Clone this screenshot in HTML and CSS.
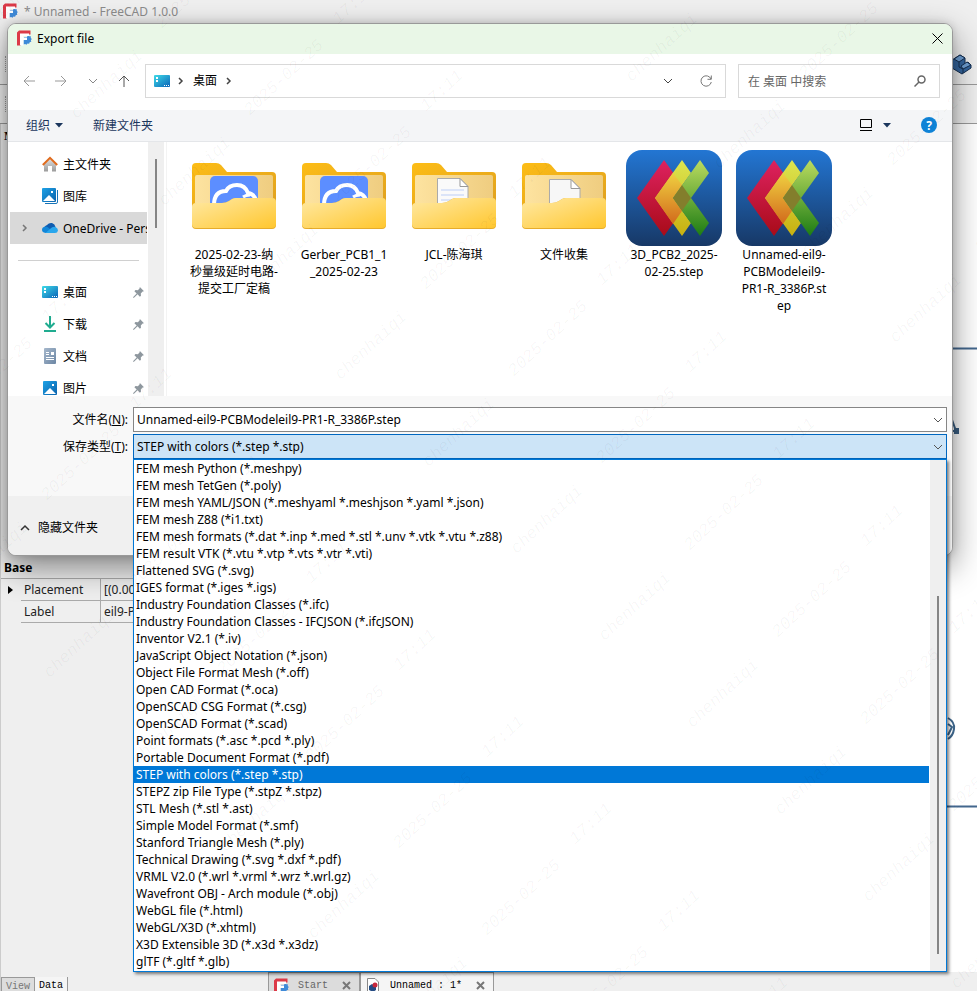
FILE: index.html
```html
<!DOCTYPE html>
<html lang="zh-CN">

<head>
    <meta charset="UTF-8" />
    <title>Export file</title>
    <link rel="stylesheet" href="styles.css">
</head>

<body>
    <!-- shared icons -->
    <svg class="defs" width="0" height="0" aria-hidden="true">
        <defs>
            <linearGradient id="gBack" x1="0" y1="0" x2="1" y2="1">
                <stop offset="0" stop-color="#fdbd16" />
                <stop offset="1" stop-color="#dfa01f" />
            </linearGradient>
            <linearGradient id="gInner" x1="0" y1="0" x2="1" y2="0">
                <stop offset="0" stop-color="#fde3a0" />
                <stop offset="1" stop-color="#efcd80" />
            </linearGradient>
            <linearGradient id="gFront" x1="0" y1="0" x2="1" y2="1">
                <stop offset="0" stop-color="#ffe9a4" />
                <stop offset="1" stop-color="#ffc72f" />
            </linearGradient>
            <linearGradient id="gStep" x1="0" y1="0" x2="0" y2="1">
                <stop offset="0" stop-color="#2376d3" />
                <stop offset="1" stop-color="#173866" />
            </linearGradient>
            <linearGradient id="gRed" x1="0" y1="0" x2="0" y2="1">
                <stop offset="0" stop-color="#de2260" />
                <stop offset="1" stop-color="#a80b18" />
            </linearGradient>
            <linearGradient id="gYellow" x1="0" y1="0" x2="0" y2="1">
                <stop offset="0" stop-color="#dce650" />
                <stop offset="1" stop-color="#c8b010" />
            </linearGradient>
            <linearGradient id="gOrange" x1="0" y1="0" x2="0" y2="1">
                <stop offset="0" stop-color="#efd040" />
                <stop offset="1" stop-color="#d26a1c" />
            </linearGradient>
            <linearGradient id="gGreen" x1="0" y1="0" x2="0" y2="1">
                <stop offset="0" stop-color="#bcdc60" />
                <stop offset="1" stop-color="#1d7c14" />
            </linearGradient>
            <linearGradient id="gDesk" x1="0" y1="0" x2="1" y2="1">
                <stop offset="0" stop-color="#3fdbe8" />
                <stop offset="1" stop-color="#0a63b8" />
            </linearGradient>
            <linearGradient id="gPic" x1="0" y1="0" x2="1" y2="1">
                <stop offset="0" stop-color="#1ea2e6" />
                <stop offset="1" stop-color="#0a62ac" />
            </linearGradient>
            <linearGradient id="gHouse" x1="0" y1="0" x2="0" y2="1">
                <stop offset="0" stop-color="#e2e2e2" />
                <stop offset="1" stop-color="#9b9b9b" />
            </linearGradient>
            <linearGradient id="gDoc" x1="0" y1="0" x2="1" y2="1">
                <stop offset="0" stop-color="#a6b8cc" />
                <stop offset="1" stop-color="#6c86a4" />
            </linearGradient>
        </defs>
        <symbol id="logo" viewBox="0 0 16 16">
            <path d="M3 .5h11.500v4H5V15.500H1V2.500z" fill="#dc3a48" />
            <path d="M8 7h3l.8-1.700 1.500.9 1.500.1v1.700l1 1-.9 1.300.4 1.500-1.600.4-.6 1.500-1.600-.3-1 1.300-1.400-.8-1.600.5V9z" fill="#3f8ad8" />
            <path d="M4 3.500h9V6H7.500v1.500H11V10H7.500v5.500H4z" fill="#fff" />
        </symbol>
        <symbol id="folder-back" viewBox="0 0 96 96">
            <path d="M6 17a4 4 0 0 1 4-4h20q3 0 5 2l6 7h45a4 4 0 0 1 4 4v30H6z" fill="url(#gBack)" />
            <path d="M9 27q0-2 2-2h74q2 0 2 2v26H9z" fill="url(#gInner)" />
        </symbol>
        <symbol id="folder-front" viewBox="0 0 96 96">
            <path d="M6 75V57a4 4 0 0 1 4-4h26q4 0 7-2l3-2q2-1 4-1h36a4 4 0 0 1 4 4v23a4 4 0 0 1-4 4H10a4 4 0 0 1-4-4z" fill="#e6ac2c" />
            <path d="M6 74V57a4 4 0 0 1 4-4h26q4 0 7-2l3-2q2-1 4-1h36a4 4 0 0 1 4 4v22a4 4 0 0 1-4 4H10a4 4 0 0 1-4-4z" fill="url(#gFront)" />
        </symbol>
        <symbol id="folder-cloud" viewBox="0 0 96 96">
            <use href="#folder-back" />
            <rect x="24" y="26" width="48" height="40" rx="5" fill="#5c8eff" />
            <path d="M28 55q0-14 12-14 3-6 11-6 8 0 11 8 6 1 8 7" fill="none" stroke="#fff" stroke-width="4" />
            <path d="M57 47q3-2 7-2" fill="none" stroke="#fff" stroke-width="3" />
            <use href="#folder-front" />
        </symbol>
        <symbol id="folder-text" viewBox="0 0 96 96">
            <use href="#folder-back" />
            <path d="M31.500 28.500H54l8 8V62H31.500z" fill="#fafafa" stroke="#aaa" />
            <path d="M54 28.500v8h8z" fill="#fff" stroke="#999" />
            <path d="M35 40h23M35 45h23M35 50h23" stroke="#dbe4f8" stroke-width="2" />
            <use href="#folder-front" />
        </symbol>
        <symbol id="folder-blank" viewBox="0 0 96 96">
            <use href="#folder-back" />
            <path d="M33.500 29.500H55l9 9V62H33.500z" fill="#f7f7f7" stroke="#aaa" />
            <path d="M55 29.500v9h9z" fill="#fff" stroke="#999" />
            <use href="#folder-front" />
        </symbol>
        <symbol id="step" viewBox="0 0 96 96">
            <rect width="96" height="96" rx="16" fill="url(#gStep)" />
            <path d="M38 10 11 48l27 38 18-25-9-13 9-13z" fill="url(#gRed)" />
            <path d="M56 10 29 48l27 38 9-13-18-25 18-25z" fill="url(#gYellow)" />
            <path d="M47 23 29 48l18 26 9-13-9-13 9-13z" fill="url(#gOrange)" />
            <path d="M74 10 47 48l27 38 9-13-18-25 18-25z" fill="url(#gGreen)" />
            <path d="M56 35 47 48l9 13 9-13z" fill="#837e2c" />
        </symbol>
        <symbol id="desk" viewBox="0 0 16 16">
            <rect y="2" width="16" height="12" rx="1" fill="url(#gDesk)" />
            <path d="M2 4h2v2H2zM2 7h2v2H2z" fill="#fff" />
            <path d="M10 12h1v1h-1zM12 12h1v1h-1zM14 12h1v1h-1z" fill="#fff" />
        </symbol>
        <symbol id="pin" viewBox="0 0 12 12">
            <path d="M7.500 0 12 4.500l-1.500.5-2 2 .2 2.500L7.500 10.500 5 8 .8 12 0 11.200 4 7 1.500 4.500l1.200-1.200 2.600.2 1.800-2z" fill="#8e979e" />
        </symbol>
        <symbol id="chev" viewBox="0 0 10 10">
            <path d="m1 3 4 4 4-4" fill="none" stroke="currentColor" />
        </symbol>
        <symbol id="chev-right" viewBox="0 0 8 8">
            <path d="m2 1 3 3-3 3" fill="none" stroke="currentColor" stroke-width="1.500" />
        </symbol>
        <symbol id="caret" viewBox="0 0 8 5">
            <path d="M0 0h8L4 4.500z" fill="currentColor" />
        </symbol>
    </svg>

    <!-- main window -->
    <div class="app">
        <div class="app-title">
            <svg width="16" height="16"><use href="#logo" /></svg>
            <span>* Unnamed - FreeCAD 1.0.0</span>
        </div>
        <div class="toolbar toolbar-top">
            <i class="grip"></i>
            <svg width="22" height="22" viewBox="0 0 22 22">
                <path d="M2 7 10 2l5 3v6l3-2 3 3v3l-9 6-10-6z" fill="#35669f" stroke="#142e50" />
                <path d="m4 6 6-4 5 3-6 4zM11 13l6-4 4 3-8 4z" fill="#6f9fd3" stroke="#142e50" />
                <path d="M9 9v5l4 2v4" fill="none" stroke="#142e50" />
            </svg>
        </div>
        <div class="toolbar"><i class="grip"></i></div>
        <div class="workspace">
            <div class="dock">
                <div class="tree"><b>M</b></div>
                <table class="props">
                    <colgroup>
                        <col class="mark-col">
                        <col class="name-col">
                        <col>
                    </colgroup>
                    <tr>
                        <th colspan="3">Base</th>
                    </tr>
                    <tr>
                        <td class="mark"><svg width="5" height="8"><path d="M0 0v8l5-4z" /></svg></td>
                        <td>Placement</td>
                        <td>[(0.00</td>
                    </tr>
                    <tr>
                        <td class="mark"></td>
                        <td>Label</td>
                        <td>eil9-P</td>
                    </tr>
                </table>
                <div class="dock-tabs">
                    <button>View</button>
                    <button class="active">Data</button>
                </div>
            </div>
            <div class="main">
                <div class="view">
                    <svg width="30" height="848" viewBox="0 0 30 848">
                        <path d="M0 224.500h30M0 682.500h30" stroke="#43678d" stroke-width="2" />
                        <path d="m4 293 5 14H0" fill="none" stroke="#3b5f83" stroke-width="2" />
                        <path d="M7 304h5v6H7z" fill="#3b5f83" />
                        <path d="M1 594q7 4 6 11t-6 10M1 600l4 3-4 8" fill="none" stroke="#3b6286" stroke-width="2" />
                    </svg>
                </div>
                <div class="doc-tabs">
                    <button class="doc-tab">
                        <svg width="16" height="16"><use href="#logo" /></svg>
                        <span>Start</span>
                        <svg class="x" width="9" height="9"><path d="m1 1 7 7m0-7-7 7" /></svg>
                    </button>
                    <button class="doc-tab active">
                        <svg width="16" height="16" viewBox="0 0 16 16">
                            <path d="M2.500.5H10L13.500 4v12h-11z" fill="#fff" stroke="#888" />
                            <path d="m4 8 3-2 4 2v4l-3 2-4-2z" fill="#244b83" />
                            <circle cx="10" cy="7" r="2.500" fill="#c8283c" />
                        </svg>
                        <span>Unnamed : 1*</span>
                        <svg class="x" width="9" height="9"><path d="m1 1 7 7m0-7-7 7" /></svg>
                    </button>
                </div>
            </div>
        </div>
    </div>

    <!-- export dialog -->
    <div class="dialog" role="dialog" aria-label="Export file">
        <div class="dialog-title">
            <svg width="16" height="16"><use href="#logo" /></svg>
            <span>Export file</span>
            <button class="close" aria-label="Close">
                <svg width="11" height="11"><path d="m.5.5 10 10m0-10-10 10" fill="none" stroke="#000" /></svg>
            </button>
        </div>

        <div class="nav">
            <div class="nav-buttons">
                <button aria-label="Back"><svg width="12" height="12"><path d="M12 6H1m5-5L1 6l5 5" fill="none" stroke="#999" /></svg></button>
                <button aria-label="Forward"><svg width="12" height="12"><path d="M0 6h11M6 1l5 5-5 5" fill="none" stroke="#999" /></svg></button>
                <button aria-label="Recent"><svg width="10" height="10"><use href="#chev" /></svg></button>
                <button aria-label="Up"><svg width="12" height="12"><path d="M6 12V1M1 6l5-5 5 5" fill="none" stroke="#555" /></svg></button>
            </div>
            <div class="address">
                <svg width="16" height="16"><use href="#desk" /></svg>
                <svg width="8" height="8"><use href="#chev-right" /></svg>
                <a href="#">桌面</a>
                <svg width="8" height="8"><use href="#chev-right" /></svg>
                <button class="push" aria-label="History"><svg width="10" height="10"><use href="#chev" /></svg></button>
                <button aria-label="Refresh"><svg width="12" height="12"><path d="M11 4A5.200 5.200 0 1 0 11.300 7M11.300.5v3.800H7.500" fill="none" stroke="#777" /></svg></button>
            </div>
            <div class="search">
                <input type="text" aria-label="搜索" placeholder="在 桌面 中搜索">
                <svg width="12" height="12"><circle cx="7.500" cy="4.500" r="3.500" fill="none" stroke="#666" stroke-width="1.500" /><path d="M5 7 .5 11.500" stroke="#666" stroke-width="1.500" /></svg>
            </div>
        </div>

        <div class="commands">
            <button>组织<svg width="8" height="5"><use href="#caret" /></svg></button>
            <button>新建文件夹</button>
            <button class="push" aria-label="View">
                <svg width="12" height="12"><path d="M.5.5h11v8H.5zM0 11.500h12" fill="none" stroke="#000" /></svg>
                <svg width="8" height="5"><use href="#caret" /></svg>
            </button>
            <button class="help" aria-label="Help">?</button>
        </div>

        <div class="browser">
            <div class="places">
                <a href="#" class="place">
                    <svg width="16" height="16" viewBox="0 0 16 16">
                        <path d="M2 8l6-6 6 6v7.500h-4V10H6v5.500H2z" fill="url(#gHouse)" />
                        <path d="m.8 9L8 1.800 15.200 9" fill="none" stroke="#e06b1d" stroke-width="2" />
                    </svg>
                    <span>主文件夹</span>
                </a>
                <a href="#" class="place">
                    <svg width="16" height="16" viewBox="0 0 16 16">
                        <path d="M3 15.500h11q1.500 0 1.500-1.500V2" fill="none" stroke="#1774b8" />
                        <rect width="14" height="14" rx="1" fill="url(#gPic)" />
                        <path d="m1 13 6-6 6 6z" fill="#fff" /><path d="M9 3h2v2H9z" fill="#fff" />
                    </svg>
                    <span>图库</span>
                </a>
                <a href="#" class="place selected">
                    <svg class="expand" width="8" height="8"><use href="#chev-right" /></svg>
                    <svg width="16" height="16" viewBox="0 0 16 16">
                        <path d="M2 9q0-3 3-4 2-2.500 5-2 3 1 3.500 4L10 13z" fill="#0f5cb0" />
                        <path d="M3.500 13Q0 12.500 0 9.800 0 7 3.500 6.500q2 0 4 2L10 13z" fill="#1286d8" />
                        <path d="M3 13q2-1 5-4 3-3 5.500-2 2.500 1 2.500 3.500-.5 2.500-3 2.500z" fill="#29a6ec" />
                    </svg>
                    <span>OneDrive - Personal</span>
                </a>
                <hr>
                <a href="#" class="place">
                    <svg width="16" height="16"><use href="#desk" /></svg>
                    <span>桌面</span>
                    <svg class="pin" width="11" height="11"><use href="#pin" /></svg>
                </a>
                <a href="#" class="place">
                    <svg width="16" height="16"><path d="M8 0v11M3.500 7 8 11.500 12.500 7M2 15h12" fill="none" stroke="#20ac90" stroke-width="2" /></svg>
                    <span>下载</span>
                    <svg class="pin" width="11" height="11"><use href="#pin" /></svg>
                </a>
                <a href="#" class="place">
                    <svg width="16" height="16" viewBox="0 0 16 16">
                        <rect x="2" width="12" height="16" rx="1" fill="url(#gDoc)" />
                        <path d="M4 4.500h3M4 6.500h3M4 9.500h8M4 11.500h8" stroke="#fff" /><path d="M9 4h3v3H9z" fill="#fff" />
                    </svg>
                    <span>文档</span>
                    <svg class="pin" width="11" height="11"><use href="#pin" /></svg>
                </a>
                <a href="#" class="place">
                    <svg width="16" height="16" viewBox="0 0 16 16">
                        <rect x="1" y="1" width="14" height="14" rx="1" fill="url(#gPic)" />
                        <path d="m2 14 6-6 6 6z" fill="#fff" /><path d="M10 4h2v2h-2z" fill="#fff" />
                    </svg>
                    <span>图片</span>
                    <svg class="pin" width="11" height="11"><use href="#pin" /></svg>
                </a>
            </div>
            <div class="scroll"><div class="scroll-thumb"></div></div>
            <div class="files">
                <div class="file"><svg width="96" height="96"><use href="#folder-cloud" /></svg>
                    <p>2025-02-23-纳<br>秒量级延时电路-<br>提交工厂定稿</p>
                </div>
                <div class="file"><svg width="96" height="96"><use href="#folder-cloud" /></svg>
                    <p>Gerber_PCB1_1<br>_2025-02-23</p>
                </div>
                <div class="file"><svg width="96" height="96"><use href="#folder-text" /></svg>
                    <p>JCL-陈海琪</p>
                </div>
                <div class="file"><svg width="96" height="96"><use href="#folder-blank" /></svg>
                    <p>文件收集</p>
                </div>
                <div class="file"><svg width="96" height="96"><use href="#step" /></svg>
                    <p>3D_PCB2_2025-<br>02-25.step</p>
                </div>
                <div class="file"><svg width="96" height="96"><use href="#step" /></svg>
                    <p>Unnamed-eil9-<br>PCBModeleil9-<br>PR1-R_3386P.st<br>ep</p>
                </div>
            </div>
        </div>

        <div class="form">
            <div class="row">
                <label for="fileName">文件名(<u>N</u>):</label>
                <div class="field">
                    <input type="text" id="fileName" value="Unnamed-eil9-PCBModeleil9-PR1-R_3386P.step">
                    <svg width="10" height="10"><use href="#chev" /></svg>
                </div>
            </div>
            <div class="row">
                <label for="fileType">保存类型(<u>T</u>):</label>
                <div class="field open">
                    <select id="fileType">
                        <option>STEP with colors (*.step *.stp)</option>
                    </select>
                    <svg width="10" height="10"><use href="#chev" /></svg>

                    <!-- opened list -->
                    <div class="dropdown">
                        <ul role="listbox" aria-label="保存类型">
                            <li role="option">FEM mesh Python (*.meshpy)</li>
                            <li role="option">FEM mesh TetGen (*.poly)</li>
                            <li role="option">FEM mesh YAML/JSON (*.meshyaml *.meshjson *.yaml *.json)</li>
                            <li role="option">FEM mesh Z88 (*i1.txt)</li>
                            <li role="option">FEM mesh formats (*.dat *.inp *.med *.stl *.unv *.vtk *.vtu *.z88)</li>
                            <li role="option">FEM result VTK (*.vtu *.vtp *.vts *.vtr *.vti)</li>
                            <li role="option">Flattened SVG (*.svg)</li>
                            <li role="option">IGES format (*.iges *.igs)</li>
                            <li role="option">Industry Foundation Classes (*.ifc)</li>
                            <li role="option">Industry Foundation Classes - IFCJSON (*.ifcJSON)</li>
                            <li role="option">Inventor V2.1 (*.iv)</li>
                            <li role="option">JavaScript Object Notation (*.json)</li>
                            <li role="option">Object File Format Mesh (*.off)</li>
                            <li role="option">Open CAD Format (*.oca)</li>
                            <li role="option">OpenSCAD CSG Format (*.csg)</li>
                            <li role="option">OpenSCAD Format (*.scad)</li>
                            <li role="option">Point formats (*.asc *.pcd *.ply)</li>
                            <li role="option">Portable Document Format (*.pdf)</li>
                            <li role="option" class="selected" aria-selected="true">STEP with colors (*.step *.stp)</li>
                            <li role="option">STEPZ zip File Type (*.stpZ *.stpz)</li>
                            <li role="option">STL Mesh (*.stl *.ast)</li>
                            <li role="option">Simple Model Format (*.smf)</li>
                            <li role="option">Stanford Triangle Mesh (*.ply)</li>
                            <li role="option">Technical Drawing (*.svg *.dxf *.pdf)</li>
                            <li role="option">VRML V2.0 (*.wrl *.vrml *.wrz *.wrl.gz)</li>
                            <li role="option">Wavefront OBJ - Arch module (*.obj)</li>
                            <li role="option">WebGL file (*.html)</li>
                            <li role="option">WebGL/X3D (*.xhtml)</li>
                            <li role="option">X3D Extensible 3D (*.x3d *.x3dz)</li>
                            <li role="option">glTF (*.gltf *.glb)</li>
                        </ul>
                        <div class="scroll"><div class="scroll-thumb"></div></div>
                    </div>
                </div>
            </div>
        </div>

        <div class="footer">
            <button><svg width="10" height="10"><path d="m1 7 4-4 4 4" fill="none" stroke="#333" stroke-width="1.500" /></svg>隐藏文件夹</button>
        </div>
    </div>

    <svg class="watermark" id="watermark" aria-hidden="true"></svg>

    <script>
        // watermark
        const layer = document.getElementById("watermark");
        const words = [["chenhaiqi", 0, 0], ["2025-02-25", 177, -7], ["17:11", 335, 6]];

        for (let row = -8; row < 12; row++) {
            for (let col = -1; col < 3; col++) {
                words.forEach(([word, dx, dy]) => {
                    const x = 110 + row * 88 + col * 555 + dx;
                    const y = 88 + row * 87 - col * 37 + dy;
                    const text = document.createElementNS("http://www.w3.org/2000/svg", "text");
                    text.textContent = word;
                    text.setAttribute("transform", `translate(${x} ${y}) rotate(-43)`);
                    if (x > -60 && x < innerWidth + 60 && y > -60 && y < innerHeight + 60) layer.appendChild(text);
                });
            }
        }
    </script>
</body>

</html>
```

FILE: styles.css
```css
* {
    box-sizing: border-box;
}

body {
    position: relative;
    margin: 0;
    height: 100vh;
    overflow: hidden;
    background: #efefef;
    color: #000;
    font: 12px/17px "Noto Sans", "Noto Sans CJK SC", sans-serif;
}

button,
input,
select {
    border: 0;
    padding: 0;
    margin: 0;
    background: none;
    color: inherit;
    font: inherit;
}

button {
    display: flex;
    align-items: center;
}

a {
    color: inherit;
    text-decoration: none;
}

svg {
    display: block;
    flex-shrink: 0;
}

.defs {
    position: absolute;
}

.push {
    margin-left: auto;
}

/* main window */
.app {
    display: flex;
    flex-direction: column;
    height: 100vh;
}

.app-title {
    display: flex;
    align-items: center;
    gap: 6px;
    height: 24px;
    padding: 0 2px 2px;
    color: #8c8c8c;
}

.toolbar {
    display: flex;
    align-items: center;
    height: 39px;
    padding: 0 5px;
    border-bottom: 1px solid #999;
}

.toolbar-top {
    justify-content: space-between;
    height: 61px;
    padding-top: 20px;
}

.grip {
    width: 3px;
    height: 16px;
    border: 1px dotted #999;
}

.workspace {
    display: flex;
    flex: 1;
    min-height: 0;
}

.dock {
    display: flex;
    flex-direction: column;
    width: 263px;
    border-left: 1px solid #ccc;
}

.tree {
    flex: 0 0 433px;
    padding: 4px 3px;
    font-family: "Liberation Serif", serif;
}

.props {
    border-collapse: separate;
    border-spacing: 0;
    table-layout: fixed;
    width: 100%;
    color: #222;
}

.props th,
.props td {
    height: 22px;
    padding: 0 3px;
    border: 1px solid #aaa;
    border-width: 0 1px 1px 0;
    text-align: left;
    white-space: nowrap;
}

.props th {
    border-right: 0;
    color: #000;
}

.props .mark {
    padding: 0 7px;
    border: 0;
}

.mark-col {
    width: 20px;
}

.name-col {
    width: 80px;
}

.dock-tabs {
    display: flex;
    margin-top: auto;
    font: 10px/14px "Liberation Mono", monospace;
}

.dock-tabs button {
    height: 14px;
    padding: 4px 4px 0;
    border: 1px solid #999;
    border-bottom: 0;
    background: #ddd;
    color: #777;
}

.dock-tabs .active {
    border-width: 0 1px 0 0;
    background: #f5f5f5;
    color: #000;
}

.main {
    display: flex;
    flex-direction: column;
    flex: 1;
}

.view {
    display: flex;
    justify-content: flex-end;
    flex: 1;
    min-height: 0;
    overflow: hidden;
    background: #fff;
}

.doc-tabs {
    display: flex;
    height: 19px;
    padding-left: 5px;
    font: 10px/14px "Liberation Mono", monospace;
}

.doc-tab {
    gap: 9px;
    height: 19px;
    padding: 7px 8px 0 4px;
    border: 1px solid #999;
    border-bottom: 0;
    background: #dcdcdc;
    color: #666;
}

.doc-tab.active {
    background: #f5f5f5;
    color: #000;
}

.doc-tab .x {
    margin-left: 5px;
    fill: none;
    stroke: #777;
    stroke-width: 2;
}

/* dialog */
.dialog {
    position: absolute;
    top: 23px;
    left: 7px;
    right: 24px;
    border: 1px solid #999;
    border-radius: 9px;
    background: #f8f8f8;
    box-shadow: 0 12px 32px rgba(0, 0, 0, 0.45), 0 0 8px rgba(0, 0, 0, 0.15);
}

.dialog-title {
    display: flex;
    align-items: center;
    gap: 5px;
    height: 30px;
    padding: 0 9px 2px 8px;
    border-radius: 8px 8px 0 0;
    background: #e9f7e7;
}

.close {
    margin-left: auto;
}

.nav {
    display: flex;
    align-items: center;
    height: 56px;
    padding: 0 12px 2px 0;
    background: #fff;
}

.nav-buttons {
    display: flex;
    align-items: center;
    justify-content: space-between;
    width: 137px;
    padding: 0 15px;
    color: #888;
}

.address,
.search {
    display: flex;
    align-items: center;
    height: 34px;
    border: 1px solid #d9d9d9;
}

.address {
    flex: 1;
    gap: 7px;
    padding: 0 13px 0 8px;
    color: #444;
}

.address a {
    padding: 0 1px 2px 1px;
    color: #000;
}

.address button + button {
    margin-left: 20px;
}

.search {
    width: 202px;
    margin-left: 12px;
    padding: 0 13px 0 9px;
}

.search input {
    flex: 1;
    min-width: 0;
}

.search input::placeholder {
    color: #666;
}

.commands {
    display: flex;
    align-items: center;
    gap: 30px;
    height: 32px;
    padding: 0 15px 1px 18px;
    border-bottom: 1px solid #e4e6e9;
    background: #f4f5f7;
    color: #1b365d;
}

.commands button {
    gap: 5px;
}

.commands .push {
    gap: 11px;
}

.commands .help {
    justify-content: center;
    width: 16px;
    height: 16px;
    border-radius: 50%;
    background: #0f83d7;
    color: #fff;
    font-weight: bold;
}

.browser {
    display: flex;
    height: 254px;
    background: #fff;
}

.places {
    width: 140px;
    padding: 6px 1px 0 2px;
    overflow: hidden;
}

.place {
    display: flex;
    align-items: center;
    gap: 5px;
    height: 32px;
    padding-left: 32px;
    white-space: nowrap;
    overflow: hidden;
}

.place.selected {
    padding-left: 11px;
    background: #d9d9d9;
}

.place .expand {
    margin-right: 8px;
    color: #777;
}

.place .pin {
    margin: 0 3px 0 auto;
}

.places hr {
    height: 1px;
    margin: 16px 8px 15px;
    border: 0;
    background: #d0d0d0;
}

.scroll {
    width: 16px;
    background: #efefef;
}

.scroll-thumb {
    width: 2px;
    height: 69px;
    margin: 17px 7px;
    background: #858585;
}

.files {
    display: flex;
    flex-wrap: wrap;
    align-content: flex-start;
    flex: 1;
    margin-left: 2px;
    padding: 8px 0 0 12px;
    border-left: 1px solid #f3f3f3;
}

.file {
    display: flex;
    flex-direction: column;
    align-items: center;
    width: 110px;
}

.file p {
    margin: 0;
    text-align: center;
    white-space: nowrap;
}

.form {
    display: flex;
    flex-direction: column;
    gap: 2px;
    height: 100px;
    padding: 11px 5px 0 0;
}

.row {
    display: flex;
    align-items: center;
}

.row label {
    width: 125px;
    padding-right: 5px;
    text-align: right;
}

.field {
    display: flex;
    align-items: center;
    position: relative;
    flex: 1;
    height: 25px;
    padding-right: 3px;
    border: 1px solid #868686;
    background: #fff;
    color: #555;
}

.field input,
.field select {
    flex: 1;
    min-width: 0;
    padding-left: 3px;
    appearance: none;
    color: #000;
}

.field.open {
    border-color: #0067c0;
    background: #cce4f7;
}

.dropdown {
    display: flex;
    position: absolute;
    z-index: 10;
    top: 24px;
    left: -1px;
    right: -1px;
    border: 1px solid #0078d7;
    background: #fff;
    color: #000;
    box-shadow: 2px 2px 3px rgba(0, 0, 0, 0.5);
}

.dropdown ul {
    flex: 1;
    margin: 0 1px 0 0;
    padding: 0;
    list-style: none;
}

.dropdown li {
    height: 17px;
    padding-left: 2px;
}

.dropdown .selected {
    background: #0078d7;
    color: #fff;
}

.dropdown .scroll-thumb {
    height: 358px;
    margin-top: 136px;
}

.footer {
    height: 59px;
    padding: 23px 12px;
    border-radius: 0 0 8px 8px;
    background: #f0f0f0;
}

.footer button {
    gap: 8px;
}

.watermark {
    position: absolute;
    z-index: 20;
    inset: 0;
    width: 100%;
    height: 100%;
    pointer-events: none;
    fill: rgba(0, 0, 0, 0.04);
    font: italic 17px "Liberation Mono", monospace;
    text-anchor: middle;
}
```
